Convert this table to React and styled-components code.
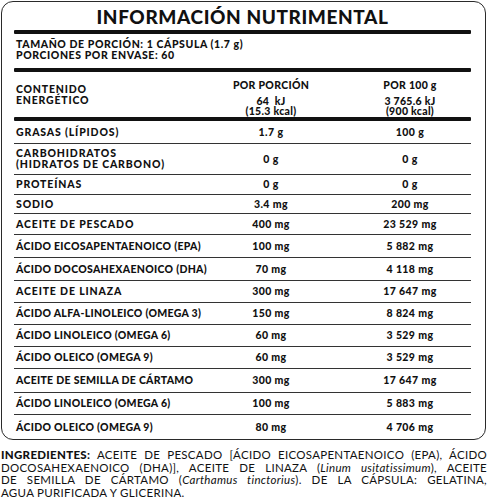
import React from "react";
import styled, { createGlobalStyle } from "styled-components";

const Global = createGlobalStyle`
  html, body { margin: 0; padding: 0; background: #fff; }
  body { font-family: "Lato", "Liberation Sans", sans-serif; color: #111; }
`;

const Page = styled.div`
  width: 488px;
  height: 499px;
  overflow: hidden;
  padding-top: 1px;
  box-sizing: border-box;
`;

const Panel = styled.div`
  margin-left: 1px;
  width: 485px;
  box-sizing: border-box;
  border: 1px solid #2a2a2a;
  border-radius: 12px;
  padding: 0 14px 0 12px;
`;

const Title = styled.h1`
  margin: 0;
  height: 28px;
  display: flex;
  align-items: center;
  justify-content: center;
  font-size: 19px;
  font-weight: 900;
  letter-spacing: 0.6px;
  padding-top: 1px;
  box-sizing: border-box;
`;

const ThickRule = styled.div`
  height: 4px;
  background: #111;
  border-radius: 1px;
`;

const Serving = styled.div`
  height: 34px;
  box-sizing: border-box;
  padding: 5px 0 0 2px;
  font-size: 10.5px;
  font-weight: 900;
  line-height: 11px;
  letter-spacing: 0.58px;
`;

const HeadRow = styled.div`
  display: grid;
  grid-template-columns: 179px 156px 1fr;
  height: 45px;
  box-sizing: border-box;
  padding-top: 8px;
  font-size: 10.5px;
  font-weight: 900;
  letter-spacing: 0.3px;
`;

const HeadLabel = styled.div`
  padding: 4px 0 0 2px;
  line-height: 11px;
  letter-spacing: 0.8px;
`;

const HeadCol = styled.div`
  text-align: center;
  line-height: 10px;
  white-space: pre;
`;

const ColTitle = styled.div`
  margin-bottom: 5px;
  line-height: 11px;
`;

const Row = styled.div`
  display: grid;
  grid-template-columns: 179px 156px 1fr;
  align-items: center;
  height: ${(p) => p.$h}px;
  box-sizing: border-box;
  border-bottom: ${(p) => (p.$last ? "none" : "1px solid #333")};
  font-size: 10.5px;
  font-weight: 900;
  line-height: 11px;
`;

const Label = styled.div`
  padding-left: 2px;
  white-space: pre;
  letter-spacing: ${(p) => (p.$tight ? "0.3px" : "0.85px")};
`;

const Value = styled.div`
  text-align: center;
  letter-spacing: 0.4px;
`;

const Ingredients = styled.div`
  margin-top: 9px;
  padding: 0 1px;
  font-size: 11.5px;
  line-height: 12.6px;
  letter-spacing: 0.3px;
  font-weight: 400;
  color: #111;
  strong { font-weight: 900; }
`;

const IngLine = styled.div`
  text-align: justify;
  text-align-last: ${(p) => (p.$last ? "left" : "justify")};
`;

const rows = [
  { l: "GRASAS (LÍPIDOS)", a: "1.7 g", b: "100 g", h: 23 },
  { l: "CARBOHIDRATOS\n(HIDRATOS DE CARBONO)", a: "0 g", b: "0 g", h: 31 },
  { l: "PROTEÍNAS", a: "0 g", b: "0 g", h: 20 },
  { l: "SODIO", a: "3.4 mg", b: "200 mg", h: 19 },
  { l: "ACEITE DE PESCADO", a: "400 mg", b: "23 529 mg", h: 21 },
  { l: "ÁCIDO EICOSAPENTAENOICO (EPA)", a: "100 mg", b: "5 882 mg", h: 23, t: true },
  { l: "ÁCIDO DOCOSAHEXAENOICO (DHA)", a: "70 mg", b: "4 118 mg", h: 23, t: true },
  { l: "ACEITE DE LINAZA", a: "300 mg", b: "17 647 mg", h: 22 },
  { l: "ÁCIDO ALFA-LINOLEICO (OMEGA 3)", a: "150 mg", b: "8 824 mg", h: 22, t: true },
  { l: "ÁCIDO LINOLEICO (OMEGA 6)", a: "60 mg", b: "3 529 mg", h: 22, t: true },
  { l: "ÁCIDO OLEICO (OMEGA 9)", a: "60 mg", b: "3 529 mg", h: 22, t: true },
  { l: "ACEITE DE SEMILLA DE CÁRTAMO", a: "300 mg", b: "17 647 mg", h: 24, t: true },
  { l: "ÁCIDO LINOLEICO (OMEGA 6)", a: "100 mg", b: "5 883 mg", h: 22, t: true },
  { l: "ÁCIDO OLEICO (OMEGA 9)", a: "80 mg", b: "4 706 mg", h: 24, t: true },
];

export default function App() {
  return (
    <Page>
      <Global />
      <Panel>
        <Title>INFORMACIÓN NUTRIMENTAL</Title>
        <ThickRule />
        <Serving>
          <div>TAMAÑO DE PORCIÓN: 1 CÁPSULA (1.7 g)</div>
          <div>PORCIONES POR ENVASE: 60</div>
        </Serving>
        <ThickRule />
        <HeadRow>
          <HeadLabel>
            CONTENIDO
            <br />
            ENERGÉTICO
          </HeadLabel>
          <HeadCol>
            <ColTitle>POR PORCIÓN</ColTitle>
            {"64  kJ\n(15.3 kcal)"}
          </HeadCol>
          <HeadCol>
            <ColTitle>POR 100 g</ColTitle>
            {"3 765.6 kJ\n(900 kcal)"}
          </HeadCol>
        </HeadRow>
        <ThickRule />
        {rows.map((r, i) => (
          <Row key={i} $h={r.h} $last={i === rows.length - 1}>
            <Label $tight={r.t}>{r.l}</Label>
            <Value>{r.a}</Value>
            <Value>{r.b}</Value>
          </Row>
        ))}
      </Panel>
      <Ingredients>
        <IngLine>
          <strong>INGREDIENTES:</strong> ACEITE DE PESCADO [ÁCIDO EICOSAPENTAENOICO (EPA), ÁCIDO
        </IngLine>
        <IngLine>
          DOCOSAHEXAENOICO (DHA)], ACEITE DE LINAZA (<i>Linum usitatissimum</i>), ACEITE
        </IngLine>
        <IngLine>
          DE SEMILLA DE CÁRTAMO (<i>Carthamus tinctorius</i>). DE LA CÁPSULA: GELATINA,
        </IngLine>
        <IngLine $last>AGUA PURIFICADA Y GLICERINA.</IngLine>
      </Ingredients>
    </Page>
  );
}
